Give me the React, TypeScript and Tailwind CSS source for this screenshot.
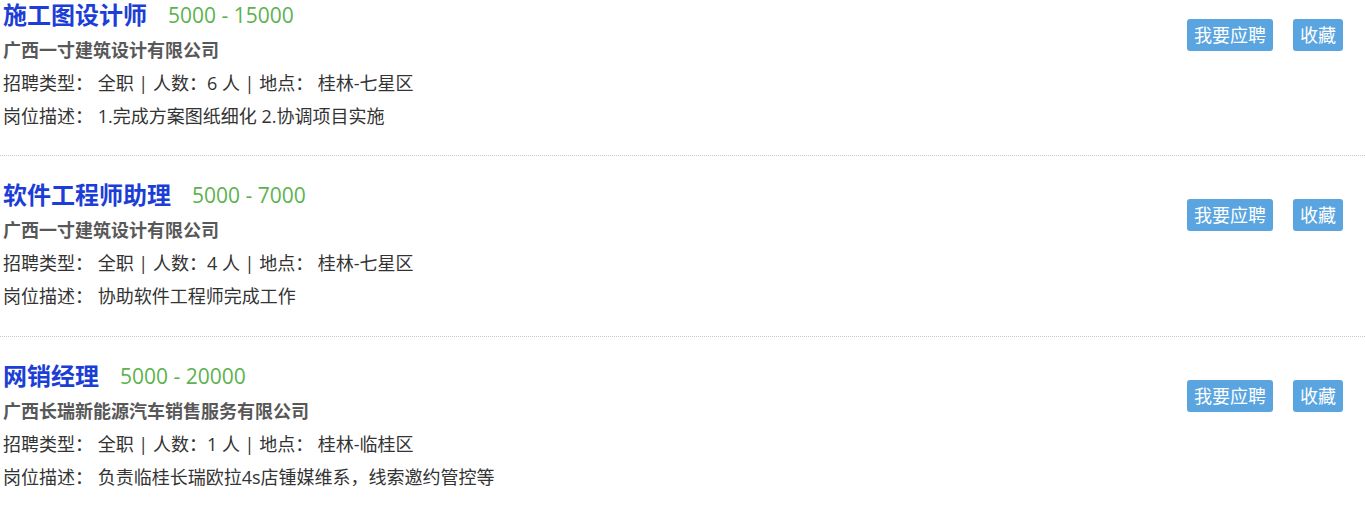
import React from "react";

interface Job {
  title: string;
  salary: string;
  company: string;
  count: number;
  location: string;
  desc: string;
}

const jobs: Job[] = [
  {
    title: "施工图设计师",
    salary: "5000 - 15000",
    company: "广西一寸建筑设计有限公司",
    count: 6,
    location: "桂林-七星区",
    desc: "1.完成方案图纸细化 2.协调项目实施",
  },
  {
    title: "软件工程师助理",
    salary: "5000 - 7000",
    company: "广西一寸建筑设计有限公司",
    count: 4,
    location: "桂林-七星区",
    desc: "协助软件工程师完成工作",
  },
  {
    title: "网销经理",
    salary: "5000 - 20000",
    company: "广西长瑞新能源汽车销售服务有限公司",
    count: 1,
    location: "桂林-临桂区",
    desc: "负责临桂长瑞欧拉4s店锺媒维系，线索邀约管控等",
  },
];

function JobCard({ job, first }: { job: Job; first: boolean }) {
  return (
    <div
      className={`flex justify-between pl-[3px] pr-[22px] border-b border-dotted border-[#c8c8c8] ${
        first ? "pt-0 pb-[23px]" : "pt-[21px] pb-[24px]"
      }`}
    >
      <div className="flex flex-col">
        {/* Title + salary */}
        <div className={`flex ${first ? "h-[33px] items-start" : "h-[36px] items-center"}`}>
          <span className="text-[24px] font-bold text-[#1c3ed6] leading-[30px]">{job.title}</span>
          <span className="ml-[21px] text-[21px] text-[#5cb24e] leading-[30px]">{job.salary}</span>
        </div>
        <div className="h-[34px] leading-[34px] text-[18px] font-bold text-[#585858]">{job.company}</div>
        <div className="h-[33px] leading-[33px] text-[18px] text-[#333]">
          招聘类型：&nbsp;全职 | 人数：{job.count} 人 | 地点：&nbsp;{job.location}
        </div>
        <div className="h-[32px] leading-[32px] text-[18px] text-[#333]">
          岗位描述：&nbsp;{job.desc}
        </div>
      </div>
      <div className={`flex items-start gap-[20px] ${first ? "mt-[19px]" : "mt-[22px]"}`}>
        <button className="h-[32px] px-[7px] rounded-[3px] bg-[#5aa5e0] text-white text-[18px] leading-[32px]">
          我要应聘
        </button>
        <button className="h-[32px] px-[7px] rounded-[3px] bg-[#5aa5e0] text-white text-[18px] leading-[32px]">
          收藏
        </button>
      </div>
    </div>
  );
}

export default function App() {
  return (
    <div
      className="w-full h-[514px] overflow-hidden bg-white"
      style={{ fontFamily: '"Open Sans", "Noto Sans CJK SC", sans-serif' }}
    >
      {jobs.map((job, i) => (
        <JobCard key={job.title} job={job} first={i === 0} />
      ))}
    </div>
  );
}
